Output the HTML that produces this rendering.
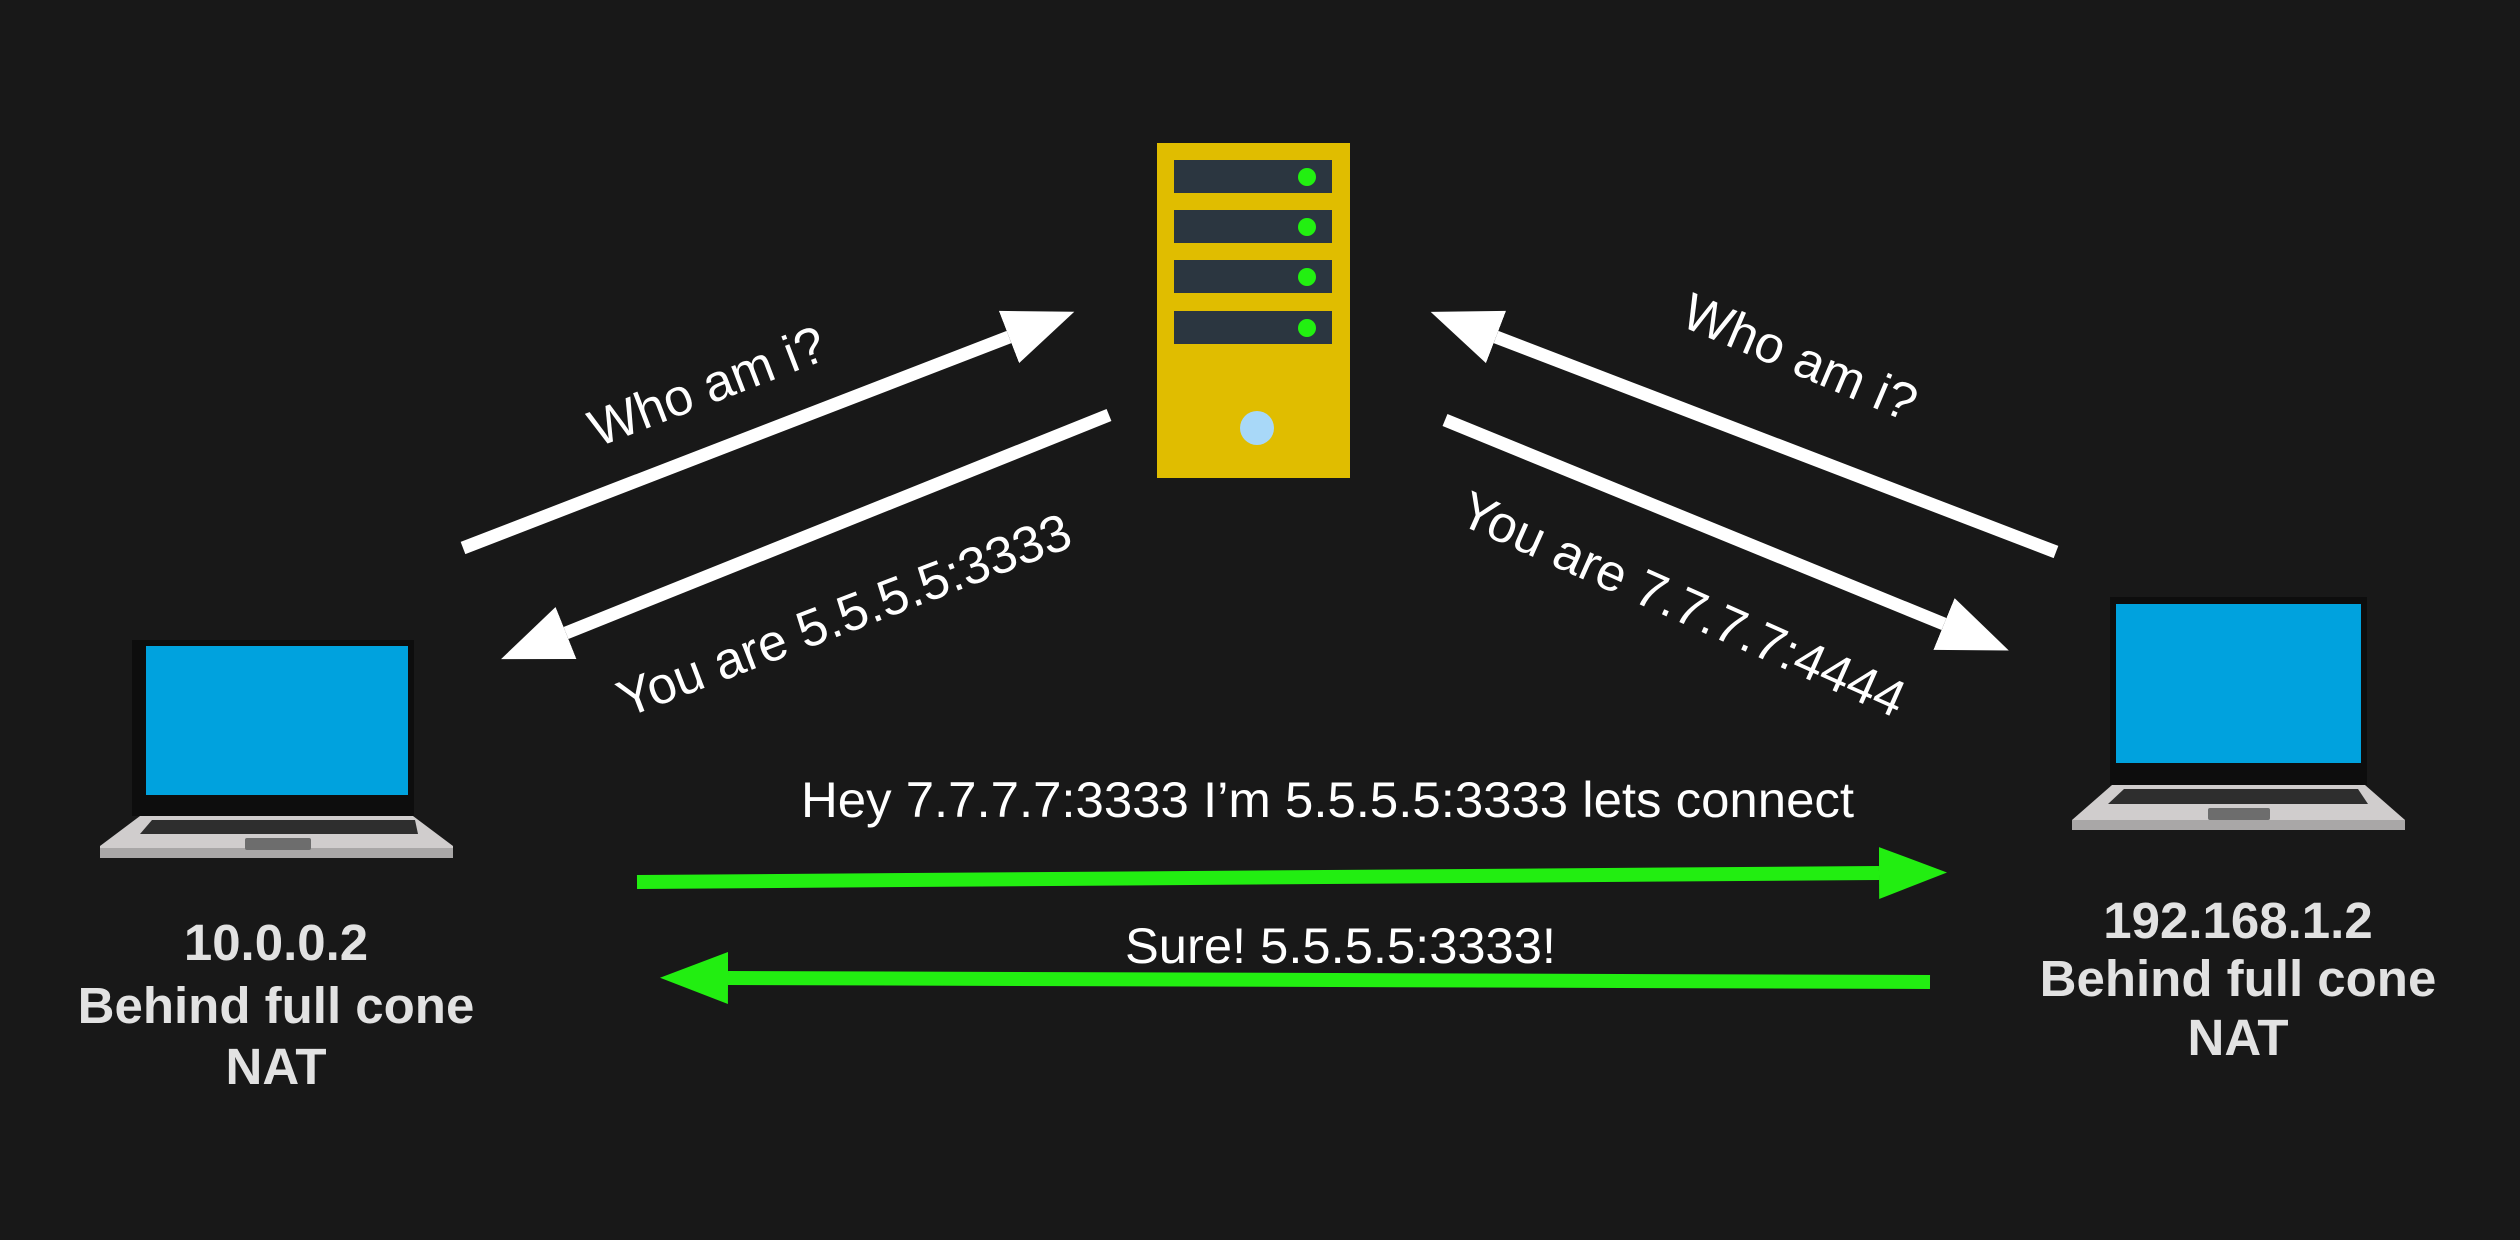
<!DOCTYPE html>
<html><head><meta charset="utf-8"><style>
html,body{margin:0;padding:0;background:#181818;}
svg{display:block;}
text{font-family:"Liberation Sans",sans-serif;}
</style></head><body>
<svg width="2520" height="1240" viewBox="0 0 2520 1240" xmlns="http://www.w3.org/2000/svg">
<defs>
<marker id="hw" markerUnits="userSpaceOnUse" markerWidth="80" markerHeight="60" refX="0" refY="30" orient="auto"><path d="M0,2 L70,30 L0,58 Z" fill="#fff"/></marker>
<marker id="hg" markerUnits="userSpaceOnUse" markerWidth="80" markerHeight="60" refX="0" refY="30" orient="auto"><path d="M0,4 L68,30 L0,56 Z" fill="#22ee11"/></marker>
</defs>
<rect width="2520" height="1240" fill="#181818"/>

<!-- server -->
<rect x="1157" y="143" width="193" height="335" fill="#e0bd00"/>
<g fill="#2b3640">
<rect x="1174" y="160" width="158" height="33"/>
<rect x="1174" y="210" width="158" height="33"/>
<rect x="1174" y="260" width="158" height="33"/>
<rect x="1174" y="311" width="158" height="33"/>
</g>
<g fill="#22f011">
<circle cx="1307" cy="177" r="9"/><circle cx="1307" cy="227" r="9"/><circle cx="1307" cy="277" r="9"/><circle cx="1307" cy="328" r="9"/>
</g>
<circle cx="1257" cy="428" r="17" fill="#a8d8f8"/>

<!-- left laptop -->
<rect x="132" y="640" width="282" height="176" fill="#0d0d0d"/>
<rect x="146" y="646" width="262" height="149" fill="#00a2de"/>
<path d="M140,816 L413,816 L453,846 L453,858 L100,858 L100,846 Z" fill="#d0cdcd"/>
<rect x="100" y="848" width="353" height="10" fill="#a9a7a7"/>
<path d="M152,820 L415,820 L418,834 L140,834 Z" fill="#2e2e2e"/>
<rect x="245" y="838" width="66" height="12" rx="2" fill="#6d6d6d"/>

<!-- right laptop -->
<rect x="2110" y="597" width="257" height="188" fill="#0d0d0d"/>
<rect x="2116" y="604" width="245" height="159" fill="#00a2de"/>
<path d="M2112,785 L2365,785 L2405,820 L2405,830 L2072,830 L2072,820 Z" fill="#d0cdcd"/>
<rect x="2072" y="820" width="333" height="10" fill="#a9a7a7"/>
<path d="M2124,789 L2358,789 L2368,804 L2108,804 Z" fill="#2e2e2e"/>
<rect x="2208" y="808" width="62" height="12" rx="2" fill="#6d6d6d"/>

<!-- white arrows -->
<g stroke="#fff" stroke-width="13" fill="none">
<line x1="463" y1="548" x2="1009" y2="337" marker-end="url(#hw)"/>
<line x1="1109" y1="415" x2="566" y2="633" marker-end="url(#hw)"/>
<line x1="2056" y1="552" x2="1496" y2="337" marker-end="url(#hw)"/>
<line x1="1445" y1="420" x2="1944" y2="624" marker-end="url(#hw)"/>
</g>
<!-- green arrows -->
<g stroke="#22ee11" stroke-width="14" fill="none">
<line x1="637" y1="882" x2="1879" y2="873" marker-end="url(#hg)"/>
<line x1="1930" y1="982" x2="728" y2="978" marker-end="url(#hg)"/>
</g>

<!-- rotated labels -->
<g fill="#fff" font-size="52" text-anchor="middle">
<text x="707" y="404" transform="rotate(-21 707 386)">Who am i?</text>
<text x="844" y="633" transform="rotate(-21 844 615)">You are 5.5.5.5:3333</text>
<text x="1800" y="375" transform="rotate(23 1800 357)">Who am i?</text>
<text x="1683" y="622" transform="rotate(24 1683 604)">You are 7.7.7.7:4444</text>
</g>
<g fill="#fff" font-size="50">
<text x="801" y="817" textLength="1053" lengthAdjust="spacingAndGlyphs">Hey 7.7.7.7:3333 I’m 5.5.5.5:3333 lets connect</text>
<text x="1125" y="963" textLength="431" lengthAdjust="spacingAndGlyphs">Sure! 5.5.5.5:3333!</text>
</g>

<!-- host labels -->
<g fill="#e2e2e2" font-size="51" font-weight="bold" text-anchor="middle">
<text x="276" y="960">10.0.0.2</text>
<text x="276" y="1023">Behind full cone</text>
<text x="276" y="1084">NAT</text>
<text x="2238" y="938">192.168.1.2</text>
<text x="2238" y="996">Behind full cone</text>
<text x="2238" y="1055">NAT</text>
</g>
</svg>
</body></html>
